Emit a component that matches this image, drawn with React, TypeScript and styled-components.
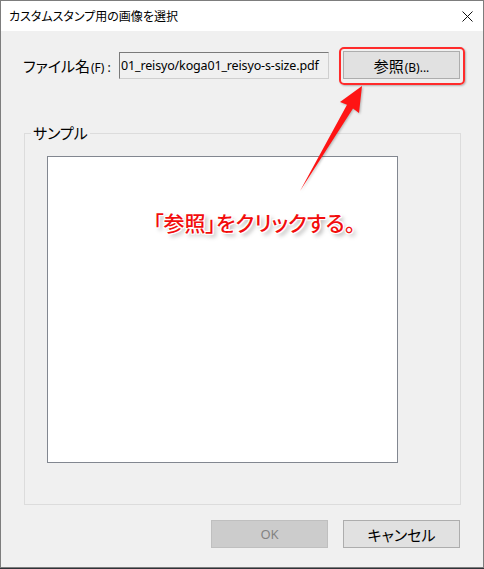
import React from 'react'
import styled, { createGlobalStyle } from 'styled-components'

const GlobalStyle = createGlobalStyle`
  html, body {
    margin: 0;
    padding: 0;
    background: #2f3338;
  }
  body {
    font-family: 'Noto Sans', 'Noto Sans CJK JP', sans-serif;
  }
`

const ui = `'Noto Sans', 'Noto Sans CJK JP', sans-serif`

const Dialog = () => {
  return (
    <>
      <GlobalStyle />
      <Window>
        <TitleBar>
          <Title>カスタムスタンプ用の画像を選択</Title>
          <CloseGlyph width="11" height="11" viewBox="0 0 11 11">
            <path d="M0.5 0.5 L10.5 10.5 M10.5 0.5 L0.5 10.5" stroke="#111" strokeWidth="1" />
          </CloseGlyph>
        </TitleBar>
        <Body>
          <FileRow>
            <FieldLabel>
              ファイル名<Mnemonic>(F) :</Mnemonic>
            </FieldLabel>
            <PathField>01_reisyo/koga01_reisyo-s-size.pdf</PathField>
            <Highlighted>
              <Button>
                参照<Mnemonic>(B)...</Mnemonic>
              </Button>
              <Ring />
            </Highlighted>
          </FileRow>
          <SampleGroup>
            <Legend>サンプル</Legend>
            <GroupInner>
              <Preview />
            </GroupInner>
          </SampleGroup>
          <Actions>
            <Button disabled>OK</Button>
            <Button>キャンセル</Button>
          </Actions>
        </Body>
        <Arrow width="484" height="569" viewBox="0 0 484 569">
          <polygon
            points="362,86 359,113 353,108.4 300,191 347,104.8 340,102"
            fill="#ff1414"
          />
        </Arrow>
        <Callout>「参照」をクリックする。</Callout>
      </Window>
    </>
  )
}

const Window = styled.div`
  position: relative;
  box-sizing: border-box;
  width: 484px;
  height: 568px;
  border: 1px solid #7d7d7d;
  background: #f0f0f0;
  display: flex;
  flex-direction: column;
`

const TitleBar = styled.div`
  height: 30px;
  background: #fff;
  display: flex;
  align-items: center;
  justify-content: space-between;
  padding: 0 10px 0 8px;
`

const Title = styled.span`
  font-family: ${ui};
  font-size: 12px;
  font-feature-settings: 'palt';
  color: #000;
`

const CloseGlyph = styled.svg`
  display: block;
`

const Body = styled.div`
  flex: 1;
  display: flex;
  flex-direction: column;
  padding: 20px 23px 0 22px;
`

const FileRow = styled.div`
  display: flex;
  align-items: center;
  height: 28px;
`

const FieldLabel = styled.span`
  width: 96px;
  font-family: ${ui};
  font-size: 15px;
  font-feature-settings: 'palt';
  color: #000;
  white-space: nowrap;
`

const Mnemonic = styled.span`
  font-size: 12px;
  margin-left: 1px;
`

const PathField = styled.div`
  box-sizing: border-box;
  width: 210px;
  height: 27px;
  margin-top: 1px;
  border: 1px solid;
  border-color: #7a7a7a #cfcfcf #cfcfcf #7a7a7a;
  background: #f0f0f0;
  font-family: ${ui};
  font-size: 12.5px;
  letter-spacing: -0.15px;
  line-height: 25px;
  padding-left: 1px;
  color: #000;
  white-space: nowrap;
  overflow: hidden;
`

const Highlighted = styled.div`
  position: relative;
  margin-left: 14px;
  display: flex;
`

const Ring = styled.div`
  position: absolute;
  inset: -4px -5px -6px -4px;
  border: 2px solid #ff2b2b;
  border-radius: 5px;
  box-shadow: 1px 1px 2px rgba(0, 0, 0, 0.25);
  pointer-events: none;
`

const Button = styled.button`
  box-sizing: border-box;
  width: 117px;
  height: 28px;
  padding: 0;
  border: 1px solid ${(p) => (p.disabled ? '#bfbfbf' : '#adadad')};
  background: ${(p) => (p.disabled ? '#cccccc' : '#e1e1e1')};
  color: ${(p) => (p.disabled ? '#838383' : '#000')};
  font-family: ${ui};
  font-size: ${(p) => (p.disabled ? '13px' : '15px')};
  font-feature-settings: 'palt';
  border-radius: 0;
  cursor: default;
`

const SampleGroup = styled.fieldset`
  box-sizing: border-box;
  width: 437px;
  margin: 44px 0 0 1px;
  padding: 0;
  border: 1px solid #dcdcdc;
  min-inline-size: 0;
`

const Legend = styled.legend`
  margin-left: 6px;
  padding: 0 2px;
  font-family: ${ui};
  font-size: 15px;
  line-height: 20px;
  font-feature-settings: 'palt';
  color: #000;
`

const GroupInner = styled.div`
  padding: 13px 0 41px 22px;
`

const Preview = styled.div`
  box-sizing: border-box;
  width: 351px;
  height: 307px;
  background: #fff;
  border: 1px solid #828790;
`

const Actions = styled.div`
  display: flex;
  justify-content: flex-end;
  gap: 15px;
  margin-top: 15px;
`

const Arrow = styled.svg`
  position: absolute;
  left: -1px;
  top: -1px;
  pointer-events: none;
  filter: drop-shadow(1px 1px 1px rgba(0, 0, 0, 0.25));
`

const Callout = styled.div`
  position: absolute;
  left: 152px;
  top: 206px;
  font-family: ${ui};
  font-size: 21px;
  font-weight: 500;
  font-feature-settings: 'palt';
  color: #f20d0d;
  white-space: nowrap;
  text-shadow:
    -1px -1px 0 #fff, 1px -1px 0 #fff, -1px 1px 0 #fff, 1px 1px 0 #fff,
    0 -1px 0 #fff, 0 1px 0 #fff, -1px 0 0 #fff, 1px 0 0 #fff,
    3px 3px 4px rgba(0, 0, 0, 0.35);
`

export default Dialog
